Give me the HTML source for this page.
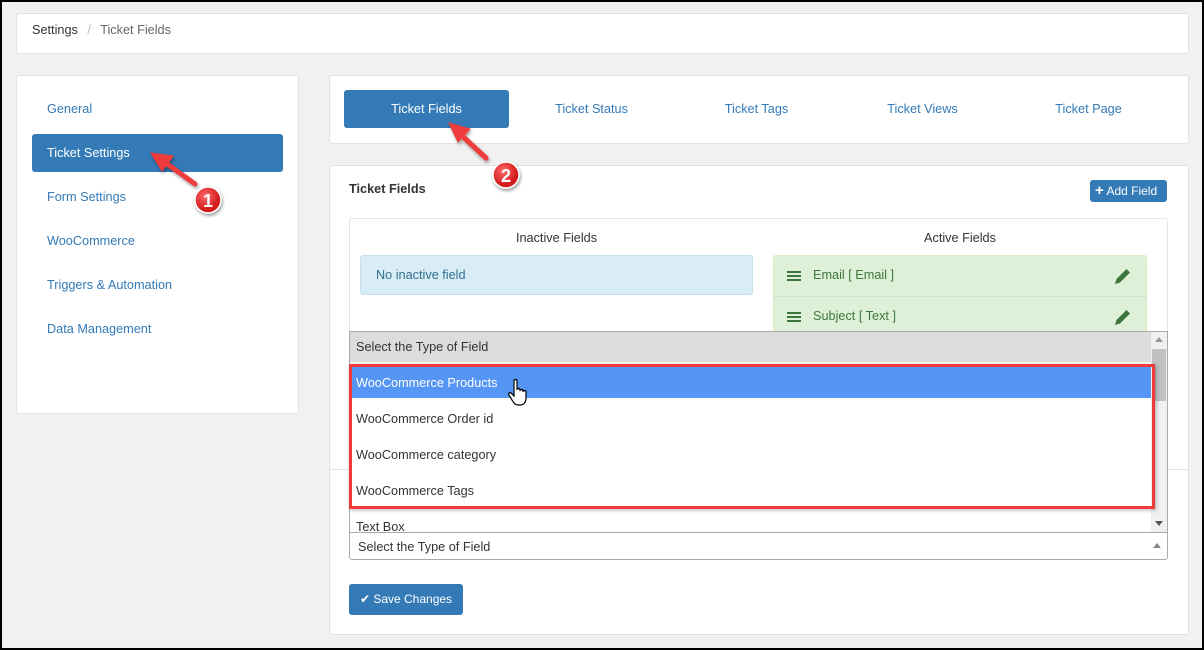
<!DOCTYPE html>
<html><head><style>
*{box-sizing:border-box;margin:0;padding:0}
body{width:1204px;height:650px;background:#f1f1f1;font-family:"Liberation Sans",sans-serif;font-size:13px;color:#333;position:relative;overflow:hidden}
.card{position:absolute;background:#fff;border:1px solid #e2e2e2;border-radius:3px}
.abs{position:absolute}
.nav{position:absolute;left:47px;color:#337ab7;font-size:12.7px}
.tab{position:absolute;top:102px;color:#337ab7;font-size:12.7px;width:165px;text-align:center}
.opt{position:absolute;left:356px;font-size:12.7px;color:#333}
.burger{position:absolute;width:14px;height:10px;border-top:2px solid #3c763d;border-bottom:2px solid #3c763d}
.burger:after{content:"";position:absolute;left:0;right:0;top:2px;height:2px;background:#3c763d}
</style></head><body>
<div class="card" style="left:16px;top:13px;width:1173px;height:41px"></div>
<div class="abs" style="left:32px;top:23px;color:#333;font-size:12.7px">Settings <span style="color:#bbb;margin:0 6px">/</span> <span style="color:#666">Ticket Fields</span></div>

<div class="card" style="left:16px;top:75px;width:283px;height:339px"></div>
<div class="nav" style="top:102px">General</div>
<div class="abs" style="left:32px;top:134px;width:251px;height:38px;background:#337ab7;border-radius:3px"></div>
<div class="nav" style="top:146px;color:#fff">Ticket Settings</div>
<div class="nav" style="top:190px">Form Settings</div>
<div class="nav" style="top:234px">WooCommerce</div>
<div class="nav" style="top:278px">Triggers &amp; Automation</div>
<div class="nav" style="top:322px">Data Management</div>

<div class="card" style="left:329px;top:75px;width:860px;height:69px"></div>
<div class="abs" style="left:344px;top:90px;width:165px;height:38px;background:#337ab7;border-radius:3px"></div>
<div class="tab" style="left:344px;color:#fff">Ticket Fields</div>
<div class="tab" style="left:509px">Ticket Status</div>
<div class="tab" style="left:674px">Ticket Tags</div>
<div class="tab" style="left:840px">Ticket Views</div>
<div class="tab" style="left:1006px">Ticket Page</div>

<div class="card" style="left:329px;top:165px;width:860px;height:470px"></div>
<div class="abs" style="left:349px;top:182px;font-weight:bold;color:#333;font-size:12.7px">Ticket Fields</div>
<div class="abs" style="left:1090px;top:180px;width:77px;height:22px;background:#337ab7;border-radius:3px;color:#fff;font-size:12px;line-height:22px;padding-left:5px"><b style="font-size:15px">+</b> Add Field</div>
<div class="abs" style="left:349px;top:218px;width:819px;height:252px;border:1px solid #e6e6e6;border-bottom:none;border-radius:3px 3px 0 0"></div>
<div class="abs" style="left:329px;top:469px;width:860px;height:1px;background:#e2e2e2"></div>
<div class="abs" style="left:360px;top:231px;width:393px;text-align:center;font-size:12.7px">Inactive Fields</div>
<div class="abs" style="left:773px;top:231px;width:374px;text-align:center;font-size:12.7px">Active Fields</div>
<div class="abs" style="left:360px;top:255px;width:393px;height:40px;background:#d9edf7;border:1px solid #c9e0ec;border-radius:3px;color:#31708f;padding:12px 15px;font-size:12.7px">No inactive field</div>
<div class="abs" style="left:773px;top:255px;width:374px;height:82px;background:#dff0d8;border:1px solid #d6e9c6;border-radius:3px"></div>
<div class="abs" style="left:773px;top:296px;width:374px;height:1px;background:#d0dfc8"></div>
<div class="burger" style="left:787px;top:271px"></div>
<div class="abs" style="left:813px;top:268px;color:#3c763d;font-size:12.7px">Email [ Email ]</div>
<div class="burger" style="left:787px;top:312px"></div>
<div class="abs" style="left:813px;top:309px;color:#3c763d;font-size:12.7px">Subject [ Text ]</div>
<svg class="abs" style="left:1113px;top:266px" width="20" height="20" viewBox="0 0 20 20"><path d="M2 18l1.5-5 10-10 3.5 3.5-10 10z" fill="#3c763d"/></svg>
<svg class="abs" style="left:1113px;top:307px" width="20" height="20" viewBox="0 0 20 20"><path d="M2 18l1.5-5 10-10 3.5 3.5-10 10z" fill="#3c763d"/></svg>

<div class="abs" style="left:349px;top:331px;width:819px;height:202px;background:#fff;border:1px solid #a9a9a9;border-bottom:none"></div>
<div class="abs" style="left:350px;top:332px;width:801px;height:30px;background:#dcdcdc"></div>
<div class="opt" style="top:340px">Select the Type of Field</div>
<div class="abs" style="left:1151px;top:332px;width:16px;height:200px;background:#f0f0f0"></div>
<div class="abs" style="left:1152px;top:349px;width:14px;height:52px;background:#c1c1c1"></div>
<div class="abs" style="left:1155px;top:337px;border:4px solid transparent;border-bottom:5px solid #999;border-top:none"></div>
<div class="abs" style="left:1155px;top:521px;border:4px solid transparent;border-top:5px solid #555;border-bottom:none"></div>
<div class="abs" style="left:350px;top:367px;width:801px;height:31px;background:#5596f5"></div>
<div class="opt" style="top:376px;color:#fff">WooCommerce Products</div>
<div class="opt" style="top:412px">WooCommerce Order id</div>
<div class="opt" style="top:448px">WooCommerce category</div>
<div class="opt" style="top:484px">WooCommerce Tags</div>
<div class="opt" style="top:520px;height:12px;overflow:hidden">Text Box</div>
<div class="abs" style="left:349px;top:364px;width:806px;height:145px;border:3px solid #ee3b3b;box-shadow:1px 1px 4px rgba(0,0,0,.3)"></div>
<svg class="abs" style="left:508px;top:378px" width="24" height="30" viewBox="0 0 24 30"><path d="M6 3c0-2 3-2 3 0v9c0-2 3-2 3 0v1c0-2 3-2 3 0v1c0-2 3-2 3 0v6c0 4-2 7-6 7h-2c-3 0-4-2-6-5l-3-5c-1-2 1-3 2-2l3 3z" fill="#fff" stroke="#000" stroke-width="1.2"/></svg>

<div class="abs" style="left:349px;top:532px;width:819px;height:28px;border:1px solid #aaa;border-radius:0 0 3px 3px;background:#fff;padding:7px 8px;font-size:12.7px">Select the Type of Field</div>
<div class="abs" style="left:1153px;top:543px;border:4px solid transparent;border-bottom:5px solid #888;border-top:none"></div>

<div class="abs" style="left:349px;top:584px;width:114px;height:31px;background:#337ab7;border-radius:3px;color:#fff;font-size:12px;line-height:31px;text-align:center">✔ Save Changes</div>

<svg class="abs" style="left:0;top:0" width="1204" height="650">
<defs><radialGradient id="g" cx="40%" cy="35%"><stop offset="0" stop-color="#ff6a6a"/><stop offset="1" stop-color="#d41e1e"/></radialGradient>
<filter id="s"><feDropShadow dx="1" dy="2" stdDeviation="1.5" flood-opacity=".4"/></filter></defs>
<g stroke="#ee3b3b" stroke-width="5" fill="#ee3b3b" stroke-linecap="round" filter="url(#s)">
<line x1="195" y1="184" x2="163" y2="161"/><polygon points="151,153 173,156 162,171" stroke-width="1"/>
<line x1="486" y1="158" x2="459" y2="133"/><polygon points="449,123 470,129 458,142" stroke-width="1"/>
</g>
<g filter="url(#s)">
<circle cx="208" cy="200" r="13" fill="url(#g)" stroke="#fff" stroke-width="1.5"/>
<circle cx="506" cy="175" r="13" fill="url(#g)" stroke="#fff" stroke-width="1.5"/></g>
<text x="208" y="207" text-anchor="middle" fill="#fff" font-weight="bold" font-size="18" font-family="Liberation Sans">1</text>
<text x="506" y="182" text-anchor="middle" fill="#fff" font-weight="bold" font-size="18" font-family="Liberation Sans">2</text>
</svg>
<div class="abs" style="left:0;top:0;width:1204px;height:650px;border:2px solid #000;pointer-events:none"></div>
</body></html>
